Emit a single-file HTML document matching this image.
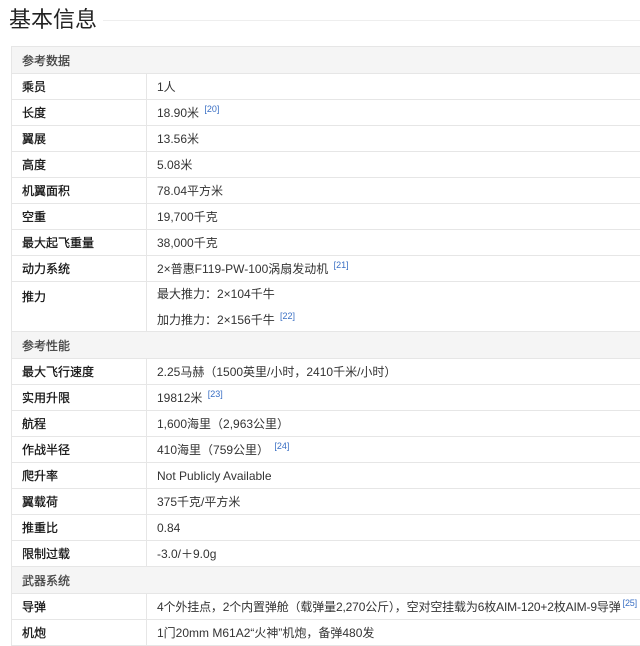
<!DOCTYPE html>
<html><head><meta charset="utf-8"><style>
body{margin:0;background:#fff;font-family:"Liberation Sans","Noto Sans CJK SC",sans-serif;color:#333;width:640px;height:642px;overflow:hidden;position:relative}
h1{position:absolute;left:9px;top:4px;margin:0;font-size:22px;font-weight:normal;color:#222;line-height:32px}
.line{position:absolute;left:103px;top:20px;right:0;height:1px;background:#eee}
table{position:absolute;left:11px;top:46px;border-collapse:collapse;width:640px;font-size:12px}
td{border:1px solid #e6e6e6;height:25px;padding:0 0 0 10px;vertical-align:middle}
td.l{width:124px;color:#111;-webkit-text-stroke:0.25px #111}
tr.h td{background:#f5f5f5;height:26px;color:#444;-webkit-text-stroke:0.3px #444}
sup{color:#3a6fc4;font-size:9px;vertical-align:5px;margin-left:2px}
.multi td{height:49px;vertical-align:top;padding-top:0}
.multi td.l{padding-top:6px;height:43px}
.multi td div{line-height:22px}
.multi td div:first-child{margin-top:1px}
.tight{letter-spacing:-0.15px}
</style></head><body>
<h1>基本信息</h1><div class="line"></div>
<table>
<tr class="h"><td colspan="2">参考数据</td></tr>
<tr><td class="l">乘员</td><td>1人</td></tr>
<tr><td class="l">长度</td><td>18.90米 <sup>[20]</sup></td></tr>
<tr><td class="l">翼展</td><td>13.56米</td></tr>
<tr><td class="l">高度</td><td>5.08米</td></tr>
<tr><td class="l">机翼面积</td><td>78.04平方米</td></tr>
<tr><td class="l">空重</td><td>19,700千克</td></tr>
<tr><td class="l">最大起飞重量</td><td>38,000千克</td></tr>
<tr><td class="l">动力系统</td><td>2×普惠F119-PW-100涡扇发动机 <sup>[21]</sup></td></tr>
<tr class="multi"><td class="l">推力</td><td><div>最大推力：2×104千牛</div><div>加力推力：2×156千牛 <sup>[22]</sup></div></td></tr>
<tr class="h"><td colspan="2">参考性能</td></tr>
<tr><td class="l">最大飞行速度</td><td>2.25马赫（1500英里/小时，2410千米/小时）</td></tr>
<tr><td class="l">实用升限</td><td>19812米 <sup>[23]</sup></td></tr>
<tr><td class="l">航程</td><td>1,600海里（2,963公里）</td></tr>
<tr><td class="l">作战半径</td><td>410海里（759公里） <sup>[24]</sup></td></tr>
<tr><td class="l">爬升率</td><td>Not Publicly Available</td></tr>
<tr><td class="l">翼载荷</td><td>375千克/平方米</td></tr>
<tr><td class="l">推重比</td><td>0.84</td></tr>
<tr><td class="l">限制过载</td><td>-3.0/＋9.0g</td></tr>
<tr class="h"><td colspan="2">武器系统</td></tr>
<tr><td class="l">导弹</td><td class="tight">4个外挂点，2个内置弹舱（载弹量2,270公斤），空对空挂载为6枚AIM-120+2枚AIM-9导弹<sup>[25]</sup></td></tr>
<tr><td class="l">机炮</td><td>1门20mm M61A2“火神”机炮，备弹480发</td></tr>
</table>
</body></html>
